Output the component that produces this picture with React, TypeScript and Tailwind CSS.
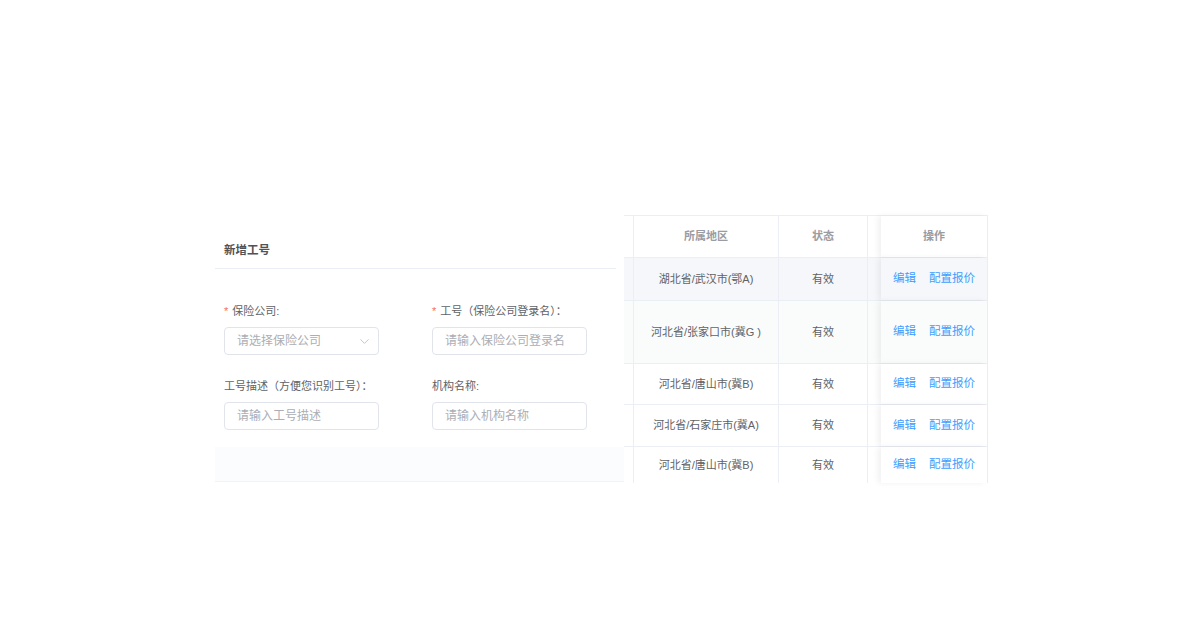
import { ChevronDown } from "lucide-react";

const rows = [
  { area: "湖北省/武汉市(鄂A)", status: "有效", h: "h-[43px]", bg: "bg-[#f5f7fa]" },
  { area: "河北省/张家口市(冀G )", status: "有效", h: "h-[63px]", bg: "bg-[#fafcfc]" },
  { area: "河北省/唐山市(冀B)", status: "有效", h: "h-[41px]", bg: "bg-white" },
  { area: "河北省/石家庄市(冀A)", status: "有效", h: "h-[42px]", bg: "bg-white" },
  { area: "河北省/唐山市(冀B)", status: "有效", h: "h-[36px]", bg: "bg-white" },
];

const font = { fontFamily: '"Liberation Sans", "Noto Sans CJK SC", sans-serif' };

function Field({ label, required, placeholder, select }: FieldProps) {
  return (
    <div className="flex flex-col">
      <label className="h-4 text-[11px] leading-4 text-[#606266]">
        {required && <span className="mr-[4px] text-[#f56c6c]">*</span>}
        {label}
      </label>
      <div className="mt-2 flex h-[28px] w-[155px] items-center rounded-[4px] border border-[#e1e4ea] bg-white pr-[6px]">
        <input
          className="w-full min-w-0 bg-transparent pl-[12px] text-[12px] text-[#606266] outline-none placeholder:text-[#abaeb4]"
          placeholder={placeholder}
          style={font}
        />
        {select && <ChevronDown className="h-[15px] w-[15px] shrink-0 text-[#b4b7bd]" strokeWidth={1.25} />}
      </div>
    </div>
  );
}

type FieldProps = {
  label: string;
  required?: boolean;
  placeholder: string;
  select?: boolean;
};

export default function App() {
  return (
    <div className="min-h-[637px] w-[1199px] bg-white" style={font}>
      <div className="ml-[215px] flex pt-[215px]">
        {/* dialog form */}
        <div className="flex h-[267px] w-[409px] flex-col">
          <div className="h-[53px] pl-[9px] pt-[27px] text-[11.5px] font-bold leading-4 text-[#505256]">
            新增工号
          </div>
          <div className="h-px w-[401px] bg-[#ebeef5]" />
          <div className="grid h-[178px] grid-cols-[155px_155px] content-start gap-x-[53px] gap-y-[23px] pl-[9px] pt-[34px]">
            <Field label="保险公司:" required placeholder="请选择保险公司" select />
            <Field label="工号（保险公司登录名）：" required placeholder="请输入保险公司登录名" />
            <Field label="工号描述（方便您识别工号）：" placeholder="请输入工号描述" />
            <Field label="机构名称:" placeholder="请输入机构名称" />
          </div>
          <div className="h-[35px] border-b border-[#eef5f5] bg-[#fbfcfd]" />
        </div>

        {/* table */}
        <div className="flex w-[364px] flex-col border-r border-t border-[#ebeef5] text-[11px]">
          <div className="grid h-[42px] grid-cols-[9px_145px_89px_14px_106px] border-b border-[#ebeef5] font-bold text-[#9a9ca3]">
            <div />
            <div className="flex items-center justify-center border-l border-[#ebeef5]">所属地区</div>
            <div className="flex items-center justify-center border-l border-[#ebeef5]">状态</div>
            <div className="border-l border-[#ebeef5]" />
            <div className="flex items-center justify-center shadow-[-3px_0_6px_rgba(0,0,0,0.06)]">操作</div>
          </div>
          {rows.map((r, i) => (
            <div
              key={i}
              className={`grid grid-cols-[9px_145px_89px_14px_106px] text-[#606266] ${r.h} ${r.bg} ${
                i < rows.length - 1 ? "border-b border-[#ebeef5]" : ""
              }`}
            >
              <div />
              <div className="flex items-center justify-center border-l border-[#ebeef5]">{r.area}</div>
              <div className="flex items-center justify-center border-l border-[#ebeef5]">{r.status}</div>
              <div className="border-l border-[#ebeef5]" />
              <div className="flex items-center justify-center gap-[13px] text-[11.5px] text-[#409eff] shadow-[-3px_0_6px_rgba(0,0,0,0.06)]">
                <span>编辑</span>
                <span>配置报价</span>
              </div>
            </div>
          ))}
        </div>
      </div>
    </div>
  );
}
